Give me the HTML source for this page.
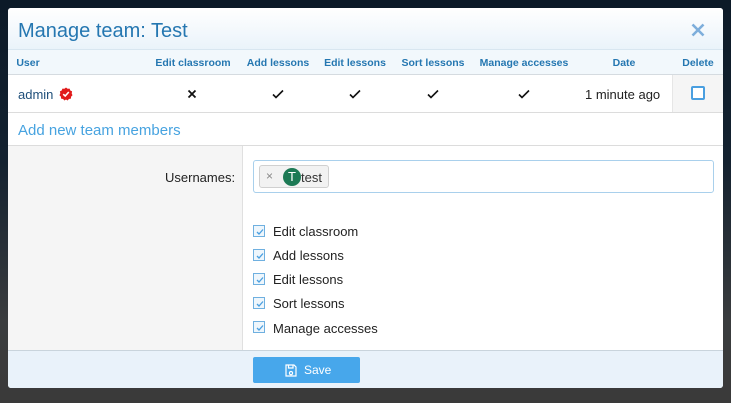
<!DOCTYPE html>
<html><head><meta charset="utf-8"><style>
*{box-sizing:border-box;margin:0;padding:0}
body{width:731px;height:403px;overflow:hidden;font-family:"Liberation Sans",sans-serif;background:linear-gradient(180deg,#0c1a28 0%,#142230 40%,#3a3c3e 80%,#3a3a3a 100%);position:relative}
#dlg{position:absolute;left:8px;top:8px;width:715px;height:380px;background:#fff;border-radius:3px;overflow:hidden}
.abs{position:absolute}
#hdr{left:0;top:0;width:715px;height:42px;background:linear-gradient(180deg,#fff,#eaf3fa);border-bottom:1px solid #d8e6f0}
#hdr h1{position:absolute;left:10px;top:12px;font-size:20px;font-weight:normal;color:#2577b1}
#thead{left:0;top:42px;width:715px;height:25px;background:#f2f8fc;border-bottom:1px solid #d5dbe0}
.th{position:absolute;top:7px;font-size:10.5px;font-weight:bold;color:#2577b1;transform:translateX(-50%);white-space:nowrap}
#row{left:0;top:67px;width:715px;height:38px;border-bottom:1px solid #dcdcdc}
#add{left:10px;top:114px;font-size:15px;color:#47a3e0}
#body{left:0;top:137px;width:715px;height:205px;border-top:1px solid #dcdcdc}
#left{left:0;top:0;width:235px;height:205px;background:#f5f5f5;border-right:1px solid #e0e0e0}
.cb{position:absolute;left:245px;width:12px;height:12px;border:1px solid #6fb0e0;background:#eef6fc}
.cb svg{position:absolute;left:1px;top:1px}
.cl{position:absolute;left:265px;font-size:13px;color:#222}
#foot{left:0;top:342px;width:715px;height:38px;background:#e9f2fa;border-top:1px solid #c9d4dc}
#save{left:245px;top:6px;width:107px;height:26px;background:#47a7eb;border-radius:2px;color:#fff;font-size:12px}
</style></head><body>
<div id="dlg">
 <div id="hdr" class="abs"><h1>Manage team: Test</h1>
  <svg class="abs" style="left:683px;top:15px" width="14" height="14" viewBox="0 0 14 14"><path d="M1.5 1.5L12.5 12.5M12.5 1.5L1.5 12.5" stroke="#7eaedb" stroke-width="2.6"/></svg>
 </div>
 <div id="thead" class="abs">
  <span class="th" style="left:20px">User</span>
  <span class="th" style="left:185px">Edit classroom</span>
  <span class="th" style="left:270px">Add lessons</span>
  <span class="th" style="left:347px">Edit lessons</span>
  <span class="th" style="left:425px">Sort lessons</span>
  <span class="th" style="left:516px">Manage accesses</span>
  <span class="th" style="left:616px">Date</span>
  <span class="th" style="left:690px">Delete</span>
 </div>
 <div id="row" class="abs">
  <span class="abs" style="left:10px;top:12px;font-size:13px;color:#1f4f7a">admin</span>
  <svg class="abs" style="left:51px;top:12px" width="14" height="14" viewBox="0 0 14 14"><path d="M7 0.5L8.6 1.8L10.6 1.6L11.3 3.5L13.1 4.4L12.7 6.4L13.5 8.2L12.1 9.6L11.9 11.6L9.9 12L8.6 13.5L7 12.5L5.4 13.5L4.1 12L2.1 11.6L1.9 9.6L0.5 8.2L1.3 6.4L0.9 4.4L2.7 3.5L3.4 1.6L5.4 1.8Z" fill="#e11b1b"/><path d="M4.2 7.2L6.2 9L9.8 5" stroke="#fff" stroke-width="1.6" fill="none"/></svg>
  <svg class="abs" style="left:179px;top:14px" width="10" height="10" viewBox="0 0 10 10"><path d="M1.5 1.5L8.5 8.5M8.5 1.5L1.5 8.5" stroke="#111" stroke-width="1.8"/></svg>
  <svg class="abs" style="left:264px;top:14px" width="12" height="10" viewBox="0 0 12 10"><path d="M1 5.5L4 8.5L11 1.5" stroke="#111" stroke-width="1.6" fill="none"/></svg>
  <svg class="abs" style="left:341px;top:14px" width="12" height="10" viewBox="0 0 12 10"><path d="M1 5.5L4 8.5L11 1.5" stroke="#111" stroke-width="1.6" fill="none"/></svg>
  <svg class="abs" style="left:419px;top:14px" width="12" height="10" viewBox="0 0 12 10"><path d="M1 5.5L4 8.5L11 1.5" stroke="#111" stroke-width="1.6" fill="none"/></svg>
  <svg class="abs" style="left:510px;top:14px" width="12" height="10" viewBox="0 0 12 10"><path d="M1 5.5L4 8.5L11 1.5" stroke="#111" stroke-width="1.6" fill="none"/></svg>
  <span class="abs" style="left:577px;top:12px;font-size:13px;color:#222">1 minute ago</span>
  <div class="abs" style="left:664px;top:0;width:51px;height:37px;background:#f5f5f5;border-left:1px solid #e6e6e6"></div>
  <div class="abs" style="left:683px;top:11px;width:14px;height:14px;border:2px solid #4a9fe0;border-radius:2px;background:#fff"></div>
 </div>
 <div id="add" class="abs">Add new team members</div>
 <div id="body" class="abs">
  <div id="left" class="abs"></div>
  <span class="abs" style="left:157px;top:24px;font-size:13px;color:#222">Usernames:</span>
  <div class="abs" style="left:245px;top:14px;width:461px;height:33px;border:1px solid #a9d0ec;border-radius:3px;background:#fff">
   <div class="abs" style="left:5px;top:4px;width:70px;height:23px;background:#f2f2f2;border:1px solid #d0d0d0;border-radius:3px">
    <span class="abs" style="left:6px;top:3px;font-size:12px;color:#888">×</span>
    <div class="abs" style="left:23px;top:2px;width:18px;height:18px;border-radius:50%;background:#1d7a55;color:#fff;font-size:13px;text-align:center;line-height:18px">T</div>
    <span class="abs" style="left:41px;top:4px;font-size:13px;color:#333">test</span>
   </div>
  </div>
  <div class="cb" style="top:79px"><svg width="10" height="10" viewBox="0 0 10 10"><path d="M2 5L4 7L8 2.5" stroke="#4a9fe0" stroke-width="1.3" fill="none"/></svg></div><span class="cl" style="top:78px">Edit classroom</span>
  <div class="cb" style="top:103px"><svg width="10" height="10" viewBox="0 0 10 10"><path d="M2 5L4 7L8 2.5" stroke="#4a9fe0" stroke-width="1.3" fill="none"/></svg></div><span class="cl" style="top:102px">Add lessons</span>
  <div class="cb" style="top:127px"><svg width="10" height="10" viewBox="0 0 10 10"><path d="M2 5L4 7L8 2.5" stroke="#4a9fe0" stroke-width="1.3" fill="none"/></svg></div><span class="cl" style="top:126px">Edit lessons</span>
  <div class="cb" style="top:151px"><svg width="10" height="10" viewBox="0 0 10 10"><path d="M2 5L4 7L8 2.5" stroke="#4a9fe0" stroke-width="1.3" fill="none"/></svg></div><span class="cl" style="top:150px">Sort lessons</span>
  <div class="cb" style="top:175px"><svg width="10" height="10" viewBox="0 0 10 10"><path d="M2 5L4 7L8 2.5" stroke="#4a9fe0" stroke-width="1.3" fill="none"/></svg></div><span class="cl" style="top:175px">Manage accesses</span>
 </div>
 <div id="foot" class="abs">
  <div id="save" class="abs">
   <svg class="abs" style="left:32px;top:7px" width="12" height="13" viewBox="0 0 12 13"><path d="M1 1H9L11 3V12H1Z M3.5 1V4H8V1 M6 7.5a1.6 1.6 0 1 0 0.01 0" stroke="#fff" stroke-width="1.2" fill="none"/></svg>
   <span class="abs" style="left:51px;top:6px">Save</span>
  </div>
 </div>
</div>
</body></html>
